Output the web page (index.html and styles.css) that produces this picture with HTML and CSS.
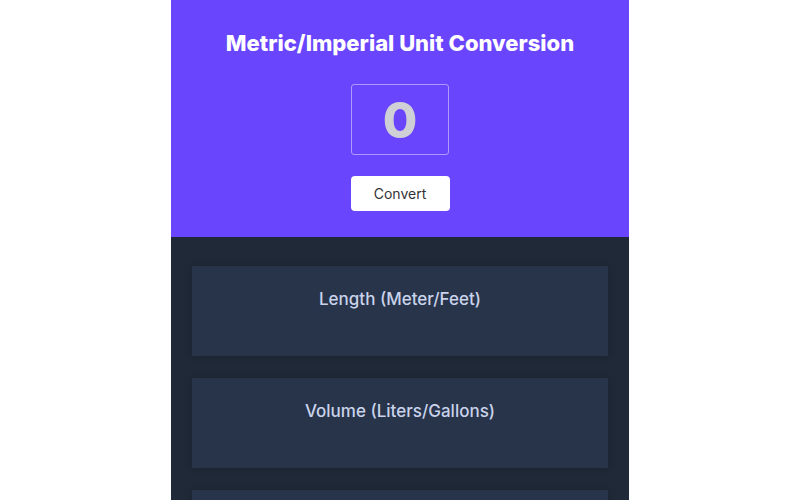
FILE: index.html
```html
<!DOCTYPE html>
<html>
<head>
<meta charset="utf-8">
<link rel="stylesheet" href="styles.css">
</head>
<body>
<main class="app">
  <header class="hero">
    <h1 class="title">Metric/Imperial Unit Conversion</h1>
    <input class="value-input" type="text" value="0">
    <button class="convert-btn">Convert</button>
  </header>
  <section class="results">
    <div class="card"><h2 class="card-title">Length (Meter/Feet)</h2></div>
    <div class="card"><h2 class="card-title">Volume (Liters/Gallons)</h2></div>
    <div class="card"><h2 class="card-title">Mass (Kilograms/Pounds)</h2></div>
  </section>
</main>
</body>
</html>
```
FILE: styles.css
```css
* { box-sizing: border-box; }
html, body { margin: 0; padding: 0; background: #ffffff; }
body { font-family: Inter, "Noto Sans", sans-serif; }
.app {
  width: 458px;
  margin: 0 auto;
  min-height: 500px;
  background: #1f2937;
}
.hero {
  background: #6a45fe;
  height: 237px;
  display: flex;
  flex-direction: column;
  align-items: center;
  padding-top: 29px;
}
.title {
  margin: 0;
  color: #ffffff;
  font-size: 22px;
  font-weight: 800;
  letter-spacing: 0;
  line-height: 28px;
}
.value-input {
  margin-top: 27px;
  width: 98px;
  height: 71px;
  background: transparent;
  border: 1px solid rgba(255,255,255,0.45);
  border-radius: 3px;
  color: #cfcfd6;
  font-family: Inter, sans-serif;
  font-size: 50px;
  font-weight: 800;
  text-align: center;
  outline: none;
  padding: 0;
}
.convert-btn {
  margin-top: 21px;
  width: 99px;
  height: 35px;
  background: #ffffff;
  border: none;
  border-radius: 4px;
  color: #333333;
  font-family: Inter, sans-serif;
  font-size: 14px;
}
.results {
  padding: 29px 21px 0;
  display: flex;
  flex-direction: column;
  gap: 22px;
}
.card {
  background: #283449;
  height: 90px;
  padding-top: 23px;
  text-align: center;
  box-shadow: 0 0 8px rgba(0,0,0,0.15);
}
.card-title {
  margin: 0;
  color: #c9d3ec;
  font-size: 17px;
  font-weight: 500;
  line-height: 20px;
}
```
